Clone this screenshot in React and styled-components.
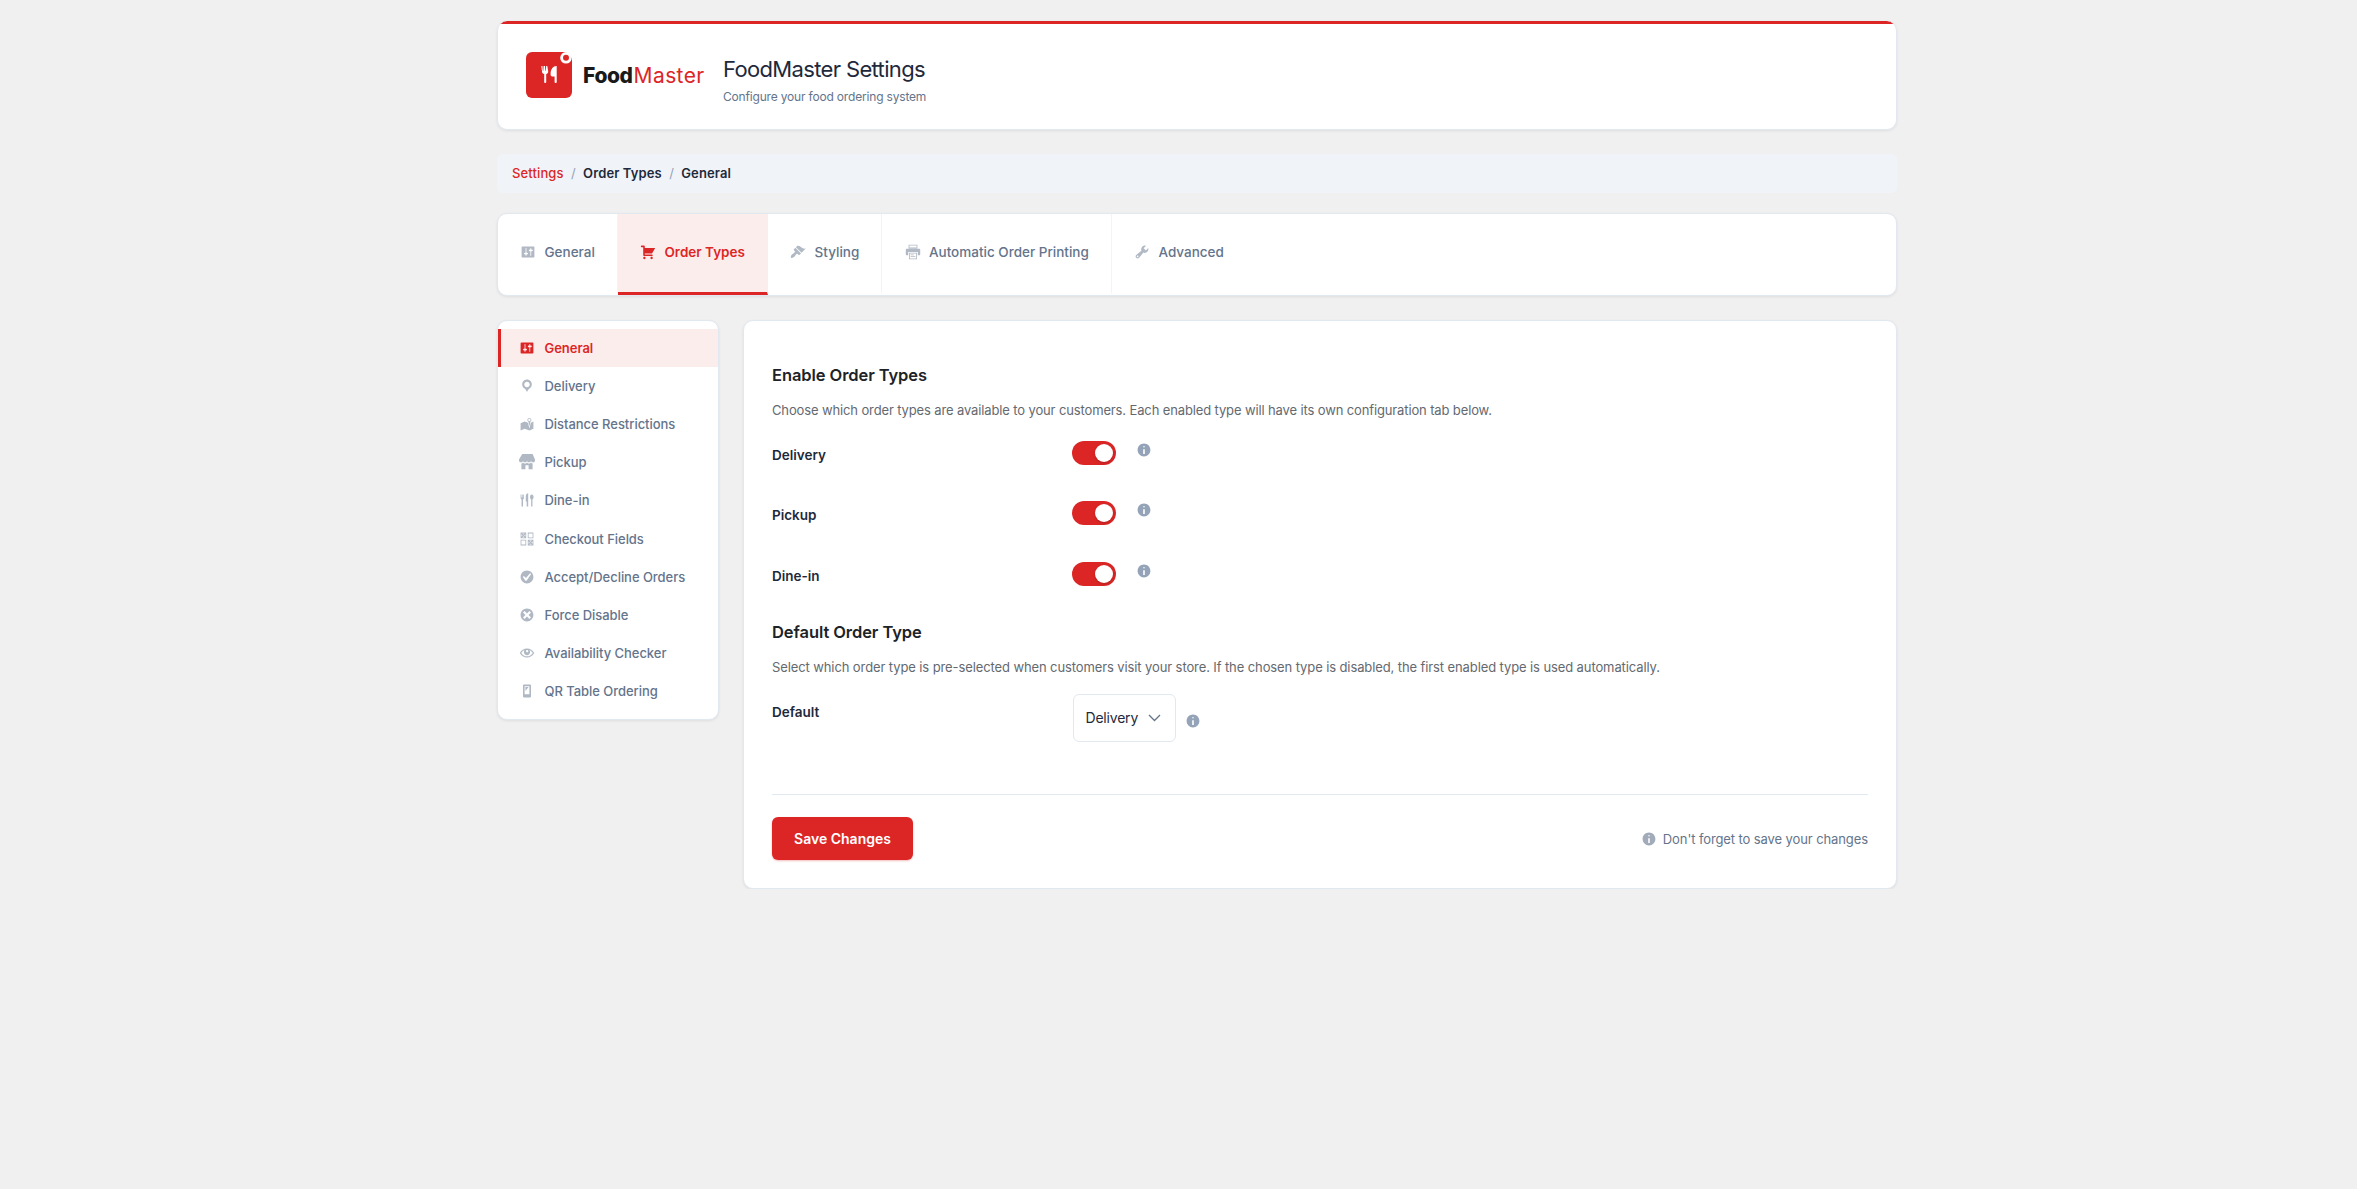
import React, { useState } from "react"
import styled, { createGlobalStyle } from "styled-components"

const icons = {
  settings:
    "M18 16V4c0-.55-.45-1-1-1H3c-.55 0-1 .45-1 1v12c0 .55.45 1 1 1h14c.55 0 1-.45 1-1zM8 11h1c.55 0 1 .45 1 1s-.45 1-1 1H8v1.5c0 .28-.22.5-.5.5s-.5-.22-.5-.5V13H6c-.55 0-1-.45-1-1s.45-1 1-1h1V5.5c0-.28.22-.5.5-.5s.5.22.5.5V11zm5-2h-1c-.55 0-1-.45-1-1s.45-1 1-1h1V5.5c0-.28.22-.5.5-.5s.5.22.5.5V7h1c.55 0 1 .45 1 1s-.45 1-1 1h-1v5.5c0 .28-.22.5-.5.5s-.5-.22-.5-.5V9z",
  cart: "M6 13h9c.55 0 1 .45 1 1s-.45 1-1 1H5c-.55 0-1-.45-1-1V4H2c-.55 0-1-.45-1-1s.45-1 1-1h3c.55 0 1 .45 1 1v2h13l-4 7H6v1zm-.5 3c.83 0 1.5.67 1.5 1.5S6.33 19 5.5 19 4 18.33 4 17.5 4.67 16 5.5 16zm9 0c.83 0 1.5.67 1.5 1.5s-.67 1.5-1.5 1.5-1.5-.67-1.5-1.5.67-1.5 1.5-1.5z",
  brush:
    "M14.48 11.06L7.41 3.99l1.5-1.5c.5-.56 2.3-.47 3.51.32 1.21.8 1.43 1.28 2.91 2.1 1.18.64 2.45 1.26 4.45.85zm-.71.71L6.7 4.7 4.93 6.47c-.39.39-.39 1.02 0 1.41l1.06 1.06c.39.39.39 1.03 0 1.42-.6.6-1.43 1.11-2.21 1.69-.35.26-.7.53-1.01.84C1.43 14.23.4 16.08 1.4 17.07c.99 1 2.84-.03 4.18-1.36.31-.31.58-.66.85-1.02.57-.78 1.08-1.61 1.69-2.21.39-.39 1.02-.39 1.41 0l1.06 1.06c.39.39 1.02.39 1.41 0z",
  printer:
    "M4.5 1h11v4.5h-11zM5.5 2v2.5h9V2zM2 6h16c.6 0 1 .4 1 1v6c0 .6-.4 1-1 1h-2v-4H4v4H2c-.6 0-1-.4-1-1V7c0-.6.4-1 1-1zM5 11h10v8H5zM6 12v6h8v-6zM7 13h4v1H7zM7 15.2h6v1H7z",
  tools:
    "M16.68 9.77c-1.34 1.34-3.3 1.67-4.95.99l-5.41 6.52c-.99.99-2.59.99-3.58 0s-.99-2.59 0-3.57l6.52-5.42c-.68-1.65-.35-3.61.99-4.95 1.28-1.28 3.12-1.62 4.72-1.06l-2.89 2.89 2.82 2.82 2.86-2.87c.53 1.58.18 3.39-1.08 4.65zM3.81 16.21c.4.39 1.04.39 1.43 0 .4-.4.4-1.04 0-1.43-.39-.4-1.03-.4-1.43 0-.39.39-.39 1.03 0 1.43z",
  location:
    "M10 2C6.69 2 4 4.69 4 8c0 2.02 1.17 3.71 2.53 4.89.43.37 1.18.96 1.85 1.83.74.97 1.41 2.01 1.62 2.71.21-.7.88-1.74 1.62-2.71.67-.87 1.42-1.46 1.85-1.83C14.83 11.71 16 10.02 16 8c0-3.31-2.69-6-6-6zm0 2.56c1.9 0 3.44 1.54 3.44 3.44S11.9 11.44 10 11.44 6.56 9.9 6.56 8 8.1 4.56 10 4.56z",
  map: "M13 13.14l1.17-5.94c.79-.43 1.33-1.25 1.33-2.2 0-1.38-1.12-2.5-2.5-2.5S10.5 3.62 10.5 5c0 .95.54 1.77 1.33 2.2zm0-9.64c.83 0 1.5.67 1.5 1.5s-.67 1.5-1.5 1.5-1.5-.67-1.5-1.5.67-1.5 1.5-1.5zm1.72 4.8L18 6.97v9L13.12 18 7 15.97l-5 2v-9l5-2 4.27 1.41 1.73 7.3z",
  store:
    "M1 10c.41.29.96.43 1.5.43.55 0 1.09-.14 1.5-.43.62-.46 1-1.17 1-2 0 .83.37 1.54 1 2 .41.29.96.43 1.5.43.55 0 1.09-.14 1.5-.43.62-.46 1-1.17 1-2 0 .83.37 1.54 1 2 .41.29.96.43 1.51.43.54 0 1.08-.14 1.49-.43.62-.46 1-1.17 1-2 0 .83.37 1.54 1 2 .41.29.96.43 1.5.43.55 0 1.09-.14 1.5-.43.63-.46 1-1.17 1-2V7l-3-7H4L0 7v1c0 .83.37 1.54 1 2zm2 8.99h5v-5h4v5h5v-7c-.37-.05-.72-.22-1-.43-.63-.45-1-.73-1-1.56 0 .83-.38 1.11-1 1.56-.41.3-.95.43-1.49.44-.55 0-1.1-.14-1.51-.44-.63-.45-1-.73-1-1.56 0 .83-.38 1.11-1 1.56-.41.3-.95.43-1.5.44-.54 0-1.09-.14-1.5-.44-.63-.45-1-.73-1-1.57 0 .84-.38 1.12-1 1.57-.29.21-.63.38-1 .44v6.99z",
  food: "M2 3h.9v4h.7V3h1v4h.7V3h.9v4.6c0 .9-.5 1.5-1.2 1.8V18H3.2V9.4C2.5 9.1 2 8.5 2 7.6zM11.5 1.5V18H9.6v-6H8.5V5c0-2 1.3-3.5 3-3.5zM16 3c1.3 0 2.2 1.3 2.2 3.1 0 1.5-.6 2.7-1.4 3.1V18h-1.600V9.200c-.8-.4-1.400-1.600-1.400-3.100C13.800 4.300 14.700 3 16 3z",
  forms:
    "M2 2h7v7H2V2zm9 0v7h7V2h-7zM5.5 4.5L7 3H4zM12 8V3h5v5h-5zM4.5 5.5L3 4v3zM8 4L6.5 5.5 8 7V4zM5.5 6.5L4 8h3zM9 18v-7H2v7h7zm9 0h-7v-7h7v7zM8 12v5H3v-5h5zm6.5 1.5L16 12h-3zM12 16l1.5-1.5L12 13v3zm3.5-1.5L17 16v-3zm-1 1L13 17h3z",
  check:
    "M10 2c-4.42 0-8 3.58-8 8s3.58 8 8 8 8-3.58 8-8-3.58-8-8-8zm-.615 12.66h-1.34l-3.24-4.54 1.341-1.25 2.569 2.4 5.141-5.931 1.34.94-5.811 8.381z",
  dismiss:
    "M10 2c4.42 0 8 3.58 8 8s-3.58 8-8 8-8-3.58-8-8 3.58-8 8-8zm5 11l-3-3 3-3-2-2-3 3-3-3-2 2 3 3-3 3 2 2 3-3 3 3z",
  eye: "M10 4.400C6.200 4.400 3 6.500 1 10c2 3.500 5.200 5.600 9 5.600s7-2.100 9-5.600c-2-3.500-5.200-5.600-9-5.600zM10 14.200c-2.900 0-5.400-1.500-7.200-4.200C3.900 8.300 5.300 7 7 6.300c-.6.7-.9 1.600-.9 2.600 0 2.200 1.700 3.900 3.900 3.900s3.900-1.700 3.900-3.900c0-1-.3-1.900-.9-2.600 1.700.7 3.100 2 4.200 3.700-1.800 2.700-4.300 4.200-7.200 4.200zM10.200 6.400c.8 0 1.400.6 1.400 1.400s-.6 1.400-1.400 1.400-1.400-.6-1.400-1.400.6-1.400 1.400-1.400z",
  phone:
    "M6 2h8c.55 0 1 .45 1 1v14c0 .55-.45 1-1 1H6c-.55 0-1-.45-1-1V3c0-.55.45-1 1-1zm7 12V4H7v10h6zM8 5h4l-4 5V5z",
  info: "M10 2c4.42 0 8 3.58 8 8s-3.58 8-8 8-8-3.58-8-8 3.58-8 8-8zm1 4c0-.55-.45-1-1-1s-1 .45-1 1 .45 1 1 1 1-.45 1-1zm0 9V9H9v6h2z",
}

const tabs = [
  { label: "General", icon: "settings" },
  { label: "Order Types", icon: "cart" },
  { label: "Styling", icon: "brush" },
  { label: "Automatic Order Printing", icon: "printer" },
  { label: "Advanced", icon: "tools" },
]

const sections = [
  { label: "General", icon: "settings" },
  { label: "Delivery", icon: "location" },
  { label: "Distance Restrictions", icon: "map" },
  { label: "Pickup", icon: "store" },
  { label: "Dine-in", icon: "food" },
  { label: "Checkout Fields", icon: "forms" },
  { label: "Accept/Decline Orders", icon: "check" },
  { label: "Force Disable", icon: "dismiss" },
  { label: "Availability Checker", icon: "eye" },
  { label: "QR Table Ordering", icon: "phone" },
]

function Icon({ name }) {
  return (
    <Glyph viewBox="0 0 20 20" aria-hidden="true">
      <path fillRule="evenodd" d={icons[name]} />
    </Glyph>
  )
}

function Logo() {
  return (
    <LogoBox>
      <svg width="46" height="46" viewBox="0 0 46 46">
        <rect width="46" height="46" rx="6" fill="#dc2626" />
        <path d="M40 0h6v6z" fill="#fff" />
        <circle cx="40" cy="5.8" r="5.8" fill="#fff" />
        <circle cx="40" cy="5.8" r="3" fill="#dc2626" />
        <path
          fill="#fff"
          d="M15.3 14h1.100l.4 4.800h.5l.3-4.800h1.400l.3 4.800h.5l.4-4.800h1.100l.9 5.300c.2 1.500-.7 2.400-2 2.800v8.100c0 1-2 1-2 0v-8.100c-1.500-.4-2.400-1.300-2.200-2.800zM30.700 14v16.200c0 1-2.100 1-2.100 0v-5.700h-2.200c-1.500 0-1.800-1-1.800-2.500 0-4.500 2.300-8 6.100-8z"
        />
      </svg>
      <Brand>
        <b>Food</b>
        <span>Master</span>
      </Brand>
    </LogoBox>
  )
}

function OrderType({ label }) {
  const [on, setOn] = useState(true)

  return (
    <Field>
      <Label>{label}</Label>
      <Control>
        <Toggle role="switch" aria-checked={on} $on={on} onClick={() => setOn(!on)} />
        <Info>
          <Icon name="info" />
        </Info>
      </Control>
    </Field>
  )
}

export default function App() {
  const [tab, setTab] = useState("Order Types")
  const [section, setSection] = useState("General")

  return (
    <Page>
      <GlobalStyle />
      <Header>
        <Logo />
        <div>
          <Title>FoodMaster Settings</Title>
          <Subtitle>Configure your food ordering system</Subtitle>
        </div>
      </Header>

      <Breadcrumb>
        <a>Settings</a>
        <i>/</i>
        <span>{tab}</span>
        <i>/</i>
        <span>{section}</span>
      </Breadcrumb>

      <Tabs>
        {tabs.map(({ label, icon }) => (
          <Tab key={label} $active={label === tab} onClick={() => setTab(label)}>
            <Icon name={icon} />
            {label}
          </Tab>
        ))}
      </Tabs>

      <Columns>
        <Sidebar>
          {sections.map(({ label, icon }) => (
            <SideItem
              key={label}
              $active={label === section}
              onClick={() => setSection(label)}
            >
              <Icon name={icon} />
              {label}
            </SideItem>
          ))}
        </Sidebar>

        <Panel>
          <Heading>Enable Order Types</Heading>
          <Description $tight>
            Choose which order types are available to your customers. Each enabled type
            will have its own configuration tab below.
          </Description>
          <OrderType label="Delivery" />
          <OrderType label="Pickup" />
          <OrderType label="Dine-in" />

          <Heading>Default Order Type</Heading>
          <Description>
            Select which order type is pre-selected when customers visit your store. If
            the chosen type is disabled, the first enabled type is used automatically.
          </Description>
          <Field>
            <Label>Default</Label>
            <SelectControl>
              <Select>
                <span>Delivery</span>
                <svg width="13" height="8" viewBox="0 0 13 8">
                  <path d="M1 1l5.5 5.5L12 1" fill="none" stroke="#64748b" strokeWidth="1.3" />
                </svg>
              </Select>
              <Info>
                <Icon name="info" />
              </Info>
            </SelectControl>
          </Field>

          <Footer>
            <SaveButton>Save Changes</SaveButton>
            <Note>
              <Icon name="info" />
              Don't forget to save your changes
            </Note>
          </Footer>
        </Panel>
      </Columns>
    </Page>
  )
}

const GlobalStyle = createGlobalStyle`
  * {
    box-sizing: border-box;
  }

  body {
    margin: 0;
    background: #f0f0f0;
    color: #1e293b;
    font-family: Inter, "Liberation Sans", sans-serif;
    font-size: 13px;
    -webkit-font-smoothing: antialiased;
  }

  button {
    font-family: inherit;
    cursor: pointer;
  }
`

const Page = styled.div`
  width: 1400px;
  margin-left: 497px;
  padding-top: 21px;
`

const Card = styled.div`
  background: #fff;
  border: 1px solid #e2e8f0;
  border-radius: 10px;
  box-shadow: 0 1px 3px rgba(0, 0, 0, 0.08);
`

const Glyph = styled.svg`
  width: 16px;
  height: 16px;
  flex-shrink: 0;
  fill: currentColor;
`

const Header = styled(Card)`
  display: flex;
  align-items: flex-start;
  height: 109px;
  padding: 31px 28px 28px;
  border-top: 0;
  background: linear-gradient(#dc2626 3px, #fff 3px);
`

const LogoBox = styled.div`
  display: flex;
  align-items: center;
  width: 197px;
`

const Brand = styled.div`
  display: flex;
  margin-left: 11px;
  padding-top: 1px;
  font-size: 21px;
  line-height: 45px;
  color: #1a1a1a;

  b {
    font-weight: 800;
    letter-spacing: -0.4px;
  }

  span {
    margin-left: 1px;
    color: #dc2626;
    letter-spacing: 0.4px;
  }
`

const Title = styled.h1`
  margin: 2px 0 3px;
  font-size: 22px;
  font-weight: 400;
  line-height: 30px;
  letter-spacing: -0.65px;
`

const Subtitle = styled.p`
  margin: 0;
  color: #64748b;
  font-size: 12px;
  line-height: 20px;
  letter-spacing: -0.18px;
`

const Breadcrumb = styled.nav`
  display: flex;
  align-items: center;
  gap: 7.3px;
  height: 39px;
  margin: 24px 0 20px;
  padding: 0 15px 1px;
  background: #f0f4f8;
  border-radius: 6px;
  font-weight: 600;
  letter-spacing: 0.12px;

  a {
    color: #dc2626;
    font-weight: 500;
  }

  i {
    color: #94a3b8;
    font-style: normal;
    font-weight: 400;
  }
`

const Tabs = styled(Card)`
  display: flex;
  height: 83px;
  overflow: hidden;
`

const Tab = styled.button`
  display: flex;
  align-items: center;
  gap: 8.3px;
  padding: 0 22.2px 1.5px;
  border: 0;
  border-right: 1px solid ${({ $active }) => ($active ? "#fceded" : "#f1f5f9")};
  border-bottom: 3px solid ${({ $active }) => ($active ? "#dc2626" : "transparent")};
  background: ${({ $active }) => ($active ? "#fceded" : "transparent")};
  color: ${({ $active }) => ($active ? "#dc2626" : "#64748b")};
  font-size: 13.5px;
  font-weight: ${({ $active }) => ($active ? 600 : 500)};

  &:last-child {
    border-right: 0;
  }

  svg {
    opacity: ${({ $active }) => ($active ? 1 : 0.5)};
  }
`

const Columns = styled.div`
  display: flex;
  align-items: flex-start;
  gap: 24px;
  margin-top: 24px;
`

const Sidebar = styled(Card)`
  width: 222px;
  padding: 8px 0 9px;
`

const SideItem = styled.button`
  display: flex;
  align-items: center;
  gap: 9.5px;
  width: 100%;
  height: 38.1px;
  padding: 0 18px;
  border: 0;
  border-left: 3px solid ${({ $active }) => ($active ? "#dc2626" : "transparent")};
  background: ${({ $active }) => ($active ? "#fceded" : "transparent")};
  color: ${({ $active }) => ($active ? "#dc2626" : "#64748b")};
  font-size: 13px;
  font-weight: ${({ $active }) => ($active ? 600 : 500)};
  letter-spacing: -0.04px;

  svg {
    opacity: ${({ $active }) => ($active ? 1 : 0.5)};
  }
`

const Panel = styled(Card)`
  flex: 1;
  height: 569px;
  padding: 28px;
`

const Heading = styled.h2`
  margin: 13.5px 0 13px;
  color: #1d2327;
  font-size: 16.5px;
  font-weight: 600;
  line-height: 24px;
  letter-spacing: -0.08px;
`

const Description = styled.p`
  margin: 0 0 5.5px;
  color: #646970;
  line-height: 20px;
  letter-spacing: ${({ $tight }) => ($tight ? "-0.13px" : "-0.105px")};
`

const Field = styled.div`
  display: grid;
  grid-template-columns: 300px 1fr;
  height: 60.5px;
`

const Label = styled.div`
  align-self: center;
  padding-bottom: 1px;
  font-size: 13.5px;
  font-weight: 600;
`

const Control = styled.div`
  display: flex;
  align-items: flex-start;
  gap: 19.5px;
  padding-top: 15.5px;
`

const Toggle = styled.button`
  display: flex;
  justify-content: ${({ $on }) => ($on ? "flex-end" : "flex-start")};
  width: 44px;
  height: 24px;
  padding: 3px;
  border: 0;
  border-radius: 12px;
  background: ${({ $on }) => ($on ? "#dc2626" : "#cbd5e1")};

  &::before {
    content: "";
    width: 18px;
    height: 18px;
    border-radius: 50%;
    background: #fff;
    box-shadow: 0 1px 3px rgba(0, 0, 0, 0.2);
  }
`

const Info = styled.span`
  display: flex;
  padding-top: 1.3px;
  color: #94a3b8;
`

const SelectControl = styled.div`
  display: flex;
  align-items: center;
  gap: 8.5px;
  height: 48px;
  margin: 11.5px 0 0 1px;

  ${Info} {
    padding-top: 6px;
  }
`

const Select = styled.button`
  display: flex;
  align-items: center;
  justify-content: space-between;
  width: 103px;
  height: 48px;
  padding: 0 14px 0 11.5px;
  border: 1px solid #e2e8f0;
  border-radius: 6px;
  background: #fff;
  color: #1e293b;
  font-size: 14px;
  letter-spacing: -0.2px;

  span {
    padding-bottom: 1px;
  }
`

const Footer = styled.div`
  display: flex;
  align-items: center;
  justify-content: space-between;
  margin-top: 51px;
  padding-top: 22px;
  border-top: 1px solid #e2e8f0;
`

const SaveButton = styled.button`
  width: 141px;
  height: 43px;
  border: 0;
  border-radius: 6px;
  background: #dc2626;
  box-shadow: 0 1px 2px rgba(220, 38, 38, 0.3);
  color: #fff;
  font-size: 14px;
  font-weight: 600;
`

const Note = styled.div`
  display: flex;
  align-items: center;
  gap: 6px;
  color: #64748b;
  letter-spacing: -0.1px;

  svg {
    opacity: 0.6;
  }
`
